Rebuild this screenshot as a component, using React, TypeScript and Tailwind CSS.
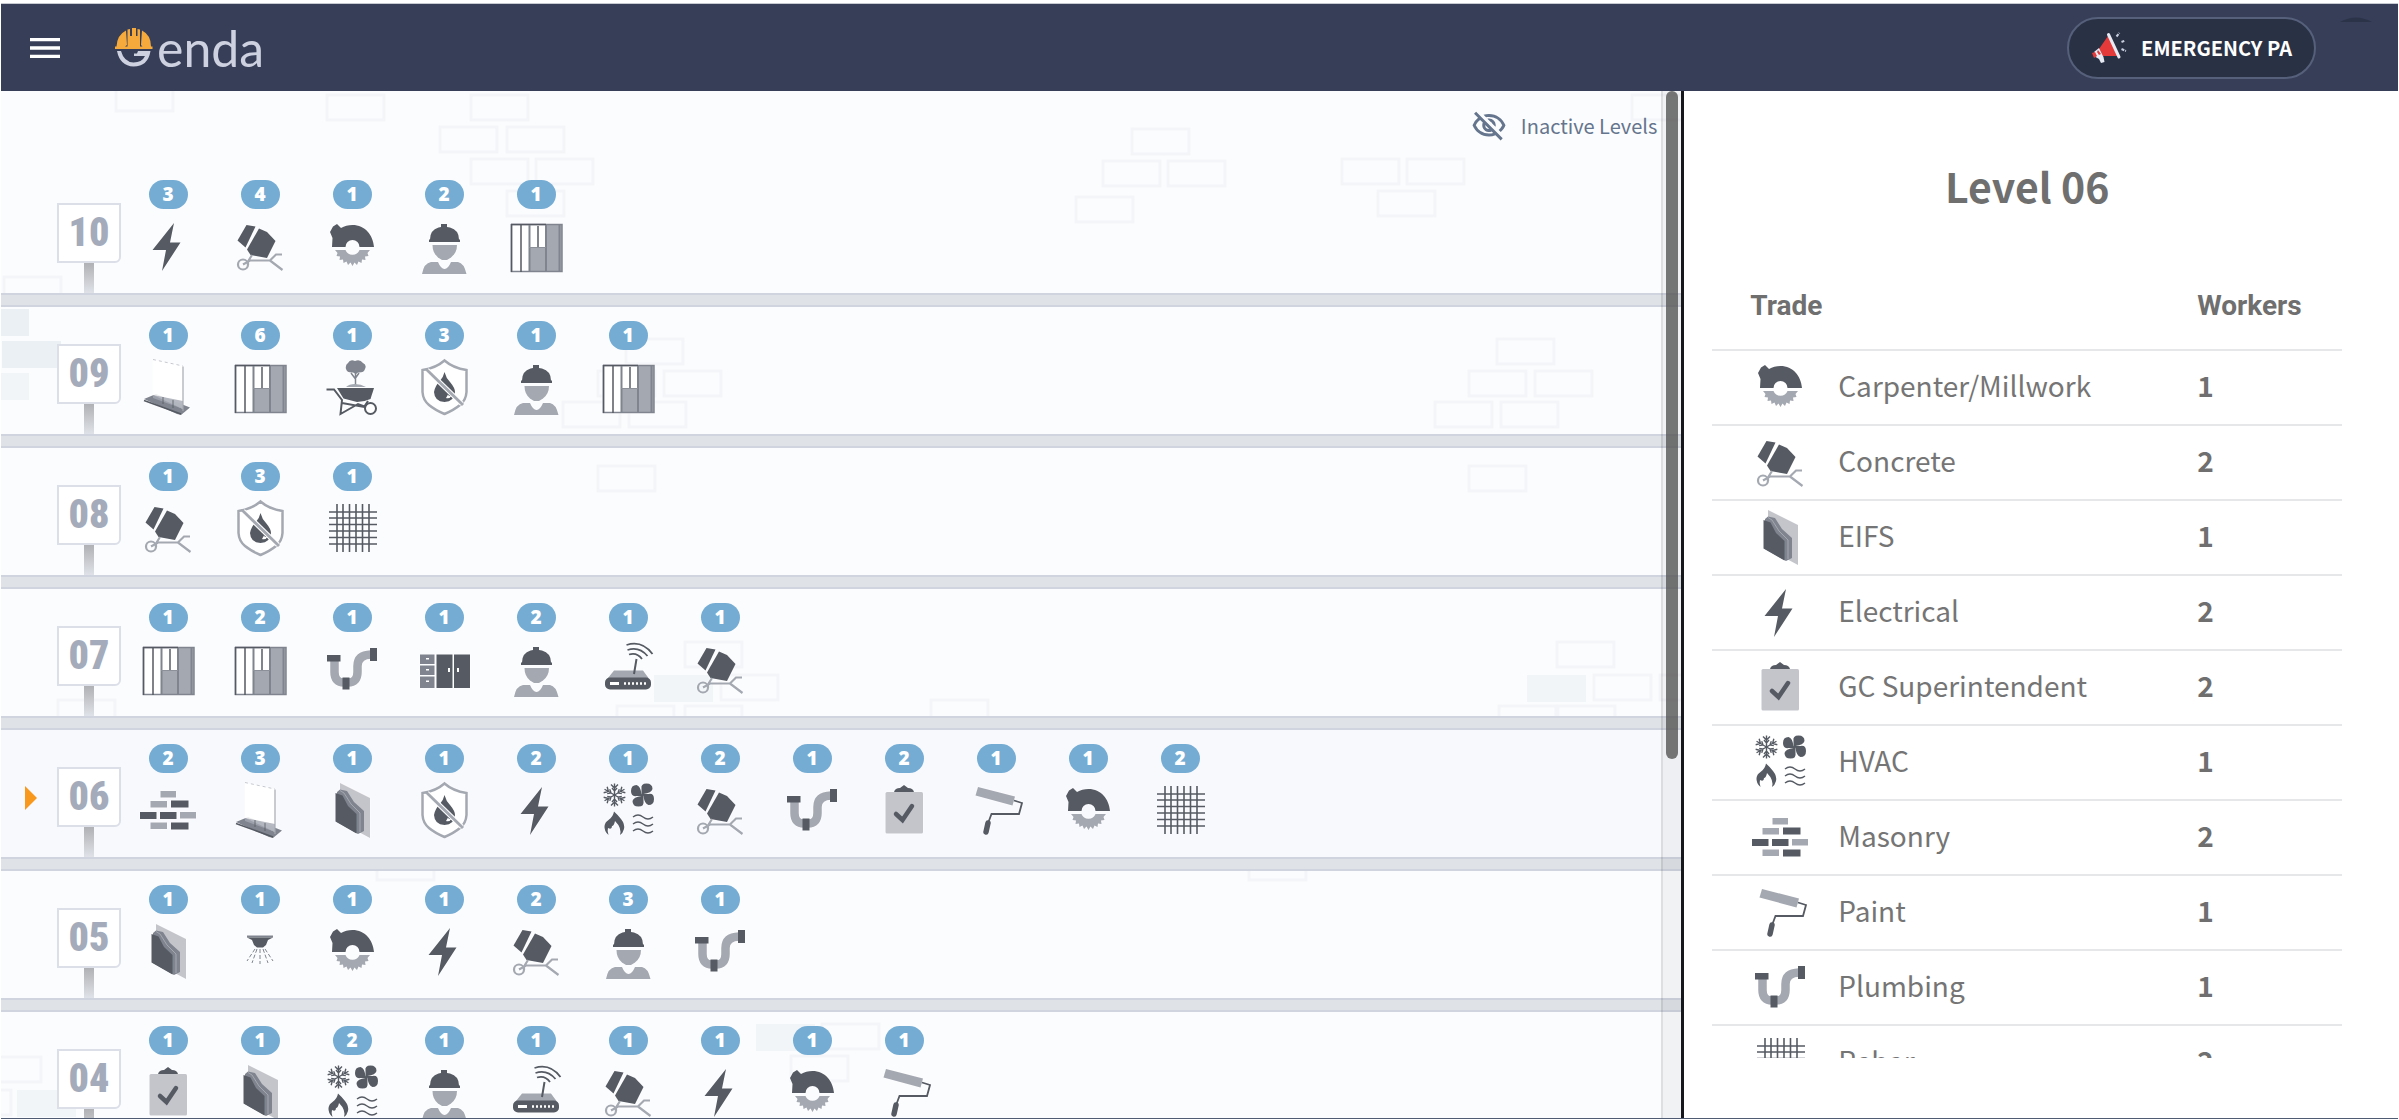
import { useState } from 'react';
import type { ReactNode } from 'react';
import { MdMenu, MdOutlineVisibilityOff } from 'react-icons/md';

type Trade =
  | 'bolt'
  | 'mixer'
  | 'saw'
  | 'worker'
  | 'partition'
  | 'drywall'
  | 'garden'
  | 'fireproof'
  | 'rebar'
  | 'pipe'
  | 'cabinet'
  | 'router'
  | 'masonry'
  | 'eifs'
  | 'hvac'
  | 'clipboard'
  | 'roller'
  | 'sprinkler';

type Crew = [Trade, number];

const DARK = '#555a63';
const MID = '#7f848e';
const LIGHT = '#a4a8b1';

const levels: { name: string; crews: Crew[] }[] = [
  {
    name: '10',
    crews: [
      ['bolt', 3],
      ['mixer', 4],
      ['saw', 1],
      ['worker', 2],
      ['partition', 1],
    ],
  },
  {
    name: '09',
    crews: [
      ['drywall', 1],
      ['partition', 6],
      ['garden', 1],
      ['fireproof', 3],
      ['worker', 1],
      ['partition', 1],
    ],
  },
  {
    name: '08',
    crews: [
      ['mixer', 1],
      ['fireproof', 3],
      ['rebar', 1],
    ],
  },
  {
    name: '07',
    crews: [
      ['partition', 1],
      ['partition', 2],
      ['pipe', 1],
      ['cabinet', 1],
      ['worker', 2],
      ['router', 1],
      ['mixer', 1],
    ],
  },
  {
    name: '06',
    crews: [
      ['masonry', 2],
      ['drywall', 3],
      ['eifs', 1],
      ['fireproof', 1],
      ['bolt', 2],
      ['hvac', 1],
      ['mixer', 2],
      ['pipe', 1],
      ['clipboard', 2],
      ['roller', 1],
      ['saw', 1],
      ['rebar', 2],
    ],
  },
  {
    name: '05',
    crews: [
      ['eifs', 1],
      ['sprinkler', 1],
      ['saw', 1],
      ['bolt', 1],
      ['mixer', 2],
      ['worker', 3],
      ['pipe', 1],
    ],
  },
  {
    name: '04',
    crews: [
      ['clipboard', 1],
      ['eifs', 1],
      ['hvac', 2],
      ['worker', 1],
      ['router', 1],
      ['mixer', 1],
      ['bolt', 1],
      ['saw', 1],
      ['roller', 1],
    ],
  },
];

const trades: { icon: Trade; name: string; workers: number }[] = [
  { icon: 'saw', name: 'Carpenter/Millwork', workers: 1 },
  { icon: 'mixer', name: 'Concrete', workers: 2 },
  { icon: 'eifs', name: 'EIFS', workers: 1 },
  { icon: 'bolt', name: 'Electrical', workers: 2 },
  { icon: 'clipboard', name: 'GC Superintendent', workers: 2 },
  { icon: 'hvac', name: 'HVAC', workers: 1 },
  { icon: 'masonry', name: 'Masonry', workers: 2 },
  { icon: 'roller', name: 'Paint', workers: 1 },
  { icon: 'pipe', name: 'Plumbing', workers: 1 },
  { icon: 'rebar', name: 'Rebar', workers: 2 },
];

const snowArms = [0, 60, 120, 180, 240, 300];
const fanBlades = [0, 90, 180, 270];

const drawings: Record<Trade, ReactNode> = {
  bolt: <path fill={DARK} d="M34 5 30 24.5H40.5L22 53 26 32H12.5Z" />,
  mixer: (
    <>
      <path fill={DARK} d="M14.5 7 23.5 8.5 13.5 29.5 5.5 22.5Z" />
      <path fill={DARK} d="M27 10.5 35 14 43.5 23 35 40 18.5 37 15 31.5Z" />
      <g fill="none" stroke={LIGHT} strokeWidth="2.2">
        <circle cx="11" cy="46.5" r="5" />
        <path d="M11 46.5 18 42.5H38L44 36.5H50M38 42.5 50.5 52M20 37 16 43.5V47" />
      </g>
    </>
  ),
  saw: (
    <>
      <path
        fill={DARK}
        d="M8 29 8.5 20 6 14 9 8.5 13 6 17 10Q22 7 28.5 7C41 7 49 17 50 29H35.5A7 7 0 0 0 21.5 29Z"
      />
      <path
        fill={LIGHT}
        d="M11 32H21.5A7.5 7.5 0 0 0 35.5 32H46L43.5 35 44.5 38 41 38.5 41.5 42 38 41.5 37.5 45 34.5 43.5 33 47 30.5 44.5 28.5 48 26.5 44.5 24 47 22.5 43.5 19.5 45 19 41.5 15.5 42 16 38.5 12.5 38 13.5 35Z"
      />
    </>
  ),
  worker: (
    <>
      <path
        fill={DARK}
        d="M13 24V21.5H14Q14 12 22.5 9.5L25 9V6H31V9L34 9.5Q43 12 43 21.5H44V24Z"
      />
      <path fill={LIGHT} d="M16.5 27H41Q41 35 35 39.5L31 42H26L22 39.5Q16.5 35 16.5 27Z" />
      <path fill={LIGHT} d="M6 56Q8 45 15 44H22Q25 51 28.5 51T35 44H42Q48 45 50.5 56Z" />
    </>
  ),
  partition: (
    <>
      <path fill="#fff" d="M3 6H37V54H3Z" />
      <path fill={LIGHT} d="M21 29H38V6H54V54H21Z" />
      <path fill="none" stroke={MID} strokeWidth="1.5" d="M3.5 6.5H54V53.5H3.5Z" />
      <path stroke={DARK} strokeWidth="1.5" d="M3.5 6V54M13 7V54M3 6.5H38" />
      <path stroke={MID} strokeWidth="2" d="M21.5 7V53M30 8V29M38 7V53M51.5 7V53" />
      <path stroke="#8c9099" d="M21 29.5H38" />
    </>
  ),
  drywall: (
    <>
      <path fill={MID} d="M4 40 16 35 50 48.5 41 56 37 55Z" />
      <path fill="#fff" fillOpacity="0.85" d="M13 1 43 7.5V50L13 36Z" />
      <path fill={LIGHT} fillOpacity="0.8" d="M13 36 43 42V50L13 39Z" />
      <path stroke={LIGHT} strokeWidth="1.2" d="M43 7.5V52" />
      <path stroke="#c5c8ce" strokeDasharray="3 3" d="M13 0.5 43 7" />
      <path stroke={DARK} strokeWidth="1.5" d="M4 41.5 41 55" />
      <path stroke={DARK} strokeWidth="0.8" d="M23 38V45M33 41V49" />
    </>
  ),
  garden: (
    <>
      <path
        fill={MID}
        d="M24 4Q26 0 31 2 36 0 39 4 43 6 41 10 40 14 34 13.5L32 15 29 13.5Q23 14 22 10 21 6 24 4Z"
      />
      <path stroke={MID} strokeWidth="1.5" fill="none" d="M31.5 14V27M31.5 20 27 14M31.5 19 35 14" />
      <path fill={LIGHT} d="M22 28Q25 25 31 25T42 28Z" />
      <path fill={DARK} d="M13 29H50L46.5 40Q40 43 33 43L19.5 39.5Z" />
      <path
        fill="none"
        stroke={DARK}
        strokeWidth="2"
        d="M2.5 30.5H10L18 41 16.5 55 34 45 46 49.5M18 44 40 48 44 42"
      />
      <circle cx="46.5" cy="49.5" r="5.5" fill="#fff" stroke={DARK} strokeWidth="2" />
    </>
  ),
  fireproof: (
    <>
      <path
        fill="#fff"
        stroke={LIGHT}
        strokeWidth="2.5"
        d="M28.5 1.5Q37 9 50.5 11V33Q50 41 44 46T28.5 55Q19 51 13 46T6.5 33V11Q20 9 28.5 1.5Z"
      />
      <path
        fill={DARK}
        d="M28.5 13Q30 19 34 23 39 29 39 33 38.5 42.5 28.5 43 18.5 42.5 18 33 19 27 23.5 22.5 27.5 18 28.5 13Z"
      />
      <path fill="#fff" d="M30 39Q34 40 35.5 36.5 33 38 32 35.5Z" />
      <path stroke="#fff" strokeWidth="5" d="M11 11 46 45" />
      <path stroke={LIGHT} strokeWidth="2.8" d="M10 10 47 46" />
    </>
  ),
  rebar: (
    <path
      stroke={DARK}
      strokeWidth="1.6"
      d="M13 4V52M19 4V52M25.5 4V52M32 4V52M38.5 4V52M45 4V52M5 12H53M5 18H53M5 24.5H53M5 31H53M5 37.5H53M5 44H53"
    />
  ),
  pipe: (
    <>
      <path
        fill="none"
        stroke={LIGHT}
        strokeWidth="8.5"
        d="M10.5 20V31Q10.5 41.5 20 41.5H24Q33.5 41.5 33.5 31V25Q33.5 14 47 13.5"
      />
      <path fill={DARK} d="M3 14H16.5V20.5H3ZM18.5 36.5H25.5V48.5H18.5ZM46 7H53V20H46Z" />
    </>
  ),
  cabinet: (
    <>
      <path fill={MID} d="M4 13.5H18.5V23H4ZM4 24.5H18.5V34H4ZM4 35.5H18.5V47H4Z" />
      <path fill={DARK} d="M20.5 13.5H36.5V47H20.5ZM38 13.5H54V47H38Z" />
      <path
        fill="#fff"
        d="M10 17H13V18.5H10ZM10 28H13V29.5H10ZM10 39.5H13V41H10ZM32 27H34V31H32ZM41 27H43V31H41Z"
      />
    </>
  ),
  router: (
    <>
      <path fill={LIGHT} d="M14 29.5H43L48.5 37H8Z" />
      <rect x="5" y="36.5" width="46" height="12" rx="5" fill={DARK} />
      <path fill="#fff" d="M10 41H19V44H10Z" />
      <path stroke="#fff" strokeWidth="2.5" strokeDasharray="2 2" d="M24 42.5H48" />
      <path stroke={DARK} strokeWidth="2" d="M34 33 36.5 18" />
      <g fill="none" stroke={DARK} strokeWidth="1.8">
        <path d="M26.5 4Q42 -1 52.5 13" />
        <path d="M27.5 9Q39 5 47.5 15" />
        <path d="M29 13.5Q37 11 42 18" />
      </g>
    </>
  ),
  masonry: (
    <>
      <path
        fill={LIGHT}
        d="M20.5 9H36V15.5H20.5ZM10.5 19H27V25.5H10.5ZM40 30H56V36.5H40ZM10.5 40.5H27V47H10.5Z"
      />
      <path
        fill={DARK}
        d="M31 18.5H48.5V25.5H31ZM0 30H16.5V37H0ZM20 30H36.5V37H20ZM31 40.5H48.5V47.5H31Z"
      />
    </>
  ),
  eifs: (
    <>
      <path fill="#c4c5cb" d="M16 1 46 16V56L16 40Z" />
      <path fill={MID} d="M13 10 16 7.5 23 9 30 20 40 29V49L34 52 13 40Z" />
      <path stroke={LIGHT} fill="none" d="M16 8.5 20 11 27 22 36 31V50" />
      <path fill={DARK} d="M11.5 11 18.5 13.5 24 24 32.5 32V51.5L11.5 39.5Z" />
    </>
  ),
  hvac: (
    <>
      <g fill="none" stroke={DARK} strokeWidth="1.4">
        {snowArms.map((deg) => (
          <path
            key={deg}
            transform={`translate(14.5 13) rotate(${deg})`}
            d="M0 0V-11.5M-3.5 -10.5 0 -7 3.5 -10.5M-2.5 -7 0 -4 2.5 -7"
          />
        ))}
      </g>
      {fanBlades.map((deg) => (
        <path
          key={deg}
          fill={DARK}
          transform={`translate(42.5 13) rotate(${deg})`}
          d="M-1 1 -1 -6Q-2 -11.5 4 -11.5 10 -11.5 10 -6 9 -2 1 -1Z"
        />
      ))}
      <path
        fill={DARK}
        d="M14 29.5Q18 33 21 37 25 42 24 47 23 51 20 53 22 46 15 39 14 44 12 44 12 48 8 46 7 49 8.5 53 4 49 4.5 44 5 40 8.5 38 13 35 14 29.5Z"
      />
      <path
        fill="none"
        stroke={DARK}
        strokeWidth="1.4"
        d="M33 35Q38 31 43 35T53 35M33 42Q38 38 43 42T53 42M33 49Q38 45 43 49T53 49"
      />
    </>
  ),
  clipboard: (
    <>
      <rect x="9.5" y="10" width="37.5" height="41.5" rx="1.5" fill="#c4c5cb" />
      <path fill={DARK} d="M18 10Q19 6 24 6L28 3 32 6Q37 6 38 10Z" />
      <path fill="none" stroke={DARK} strokeWidth="4.5" strokeLinecap="round" d="M20 32 26.5 38 36 24" />
    </>
  ),
  roller: (
    <>
      <path fill={LIGHT} d="M10 5 47 14.5 44.5 23.5 7.5 13.5Z" />
      <path fill="none" stroke={DARK} strokeWidth="1.8" d="M46 18.5 54 21 51 32H23.5L20.5 40" />
      <path stroke={DARK} strokeWidth="5.5" strokeLinecap="round" d="M20 41 18 50" />
    </>
  ),
  sprinkler: (
    <>
      <path fill={MID} d="M15 12.5H41V14.5H15Z" />
      <path fill={DARK} d="M15 14.5H41L36 17 34 22 31 24.5H25L22 22 20 17Z" />
      <path
        stroke={MID}
        strokeDasharray="4 2"
        d="M28 26V41M25 26 20 40M31 26 36 40M23 26 15 38M33 26 41 38"
      />
    </>
  ),
};

const TradeIcon = ({ trade }: { trade: Trade }) => (
  <svg
    viewBox="0 0 56 56"
    className="h-14 w-14 overflow-visible drop-shadow-[0_0_1px_white]"
    aria-hidden="true"
  >
    {drawings[trade]}
  </svg>
);

// faint brickwork behind the floors: x, y from the top of the board
const outlined: [number, number][] = [
  [115, -5], [326, 4], [470, 4], [439, 36], [506, 36], [470, 68], [535, 68],
  [506, 100], [3, 186], [1131, 38], [1102, 70], [1167, 70], [1075, 106],
  [1341, 68], [1406, 68], [1377, 100], [1631, 4], [625, 248], [597, 280],
  [663, 280], [562, 311], [628, 311], [1496, 248], [1468, 280], [1534, 280],
  [1434, 311], [1500, 311], [597, 375], [1468, 375], [684, 551], [720, 584],
  [616, 615], [684, 615], [57, 609], [930, 609], [1556, 551], [1593, 584],
  [1659, 584], [1498, 615], [1557, 615], [376, 764], [1248, 764], [821, 933],
  [790, 965], [-17, 966], [-47, 999],
];

const filled: [number, number, string][] = [
  [-31, 218, '#ebf0f4'],
  [1, 250, '#ebf0f4'],
  [-31, 282, '#f1f5f8'],
  [653, 584, '#f1f5f8'],
  [1526, 584, '#f1f5f8'],
  [755, 933, '#f1f5f8'],
  [16, 999, '#f1f5f8'],
];

const Brickwork = () => (
  <svg className="absolute inset-0 h-full w-full" aria-hidden="true">
    {filled.map(([x, y, fill]) => (
      <rect key={`${x}-${y}`} x={x} y={y} width="59" height="27" fill={fill} />
    ))}
    {outlined.map(([x, y]) => (
      <rect
        key={`${x}-${y}`}
        x={x}
        y={y}
        width="57"
        height="25"
        fill="none"
        stroke="#f3f5f8"
        strokeWidth="3"
      />
    ))}
  </svg>
);

const Logo = () => (
  <a href="#" className="flex items-center gap-1" aria-label="Genda">
    <svg viewBox="0 0 38 40" className="h-10 w-[38px]" aria-hidden="true">
      <path
        fill="#f6aa3c"
        d="M0 21V18.5H1.5Q2 7 11 2.5L12 17 10 18.5H12.5V1.5L15 1V8H17V0H21V8H22.5V1L25 1.5V18.5H27.5L26 17 27 2.5Q36 7 36 18.5H37.5V21Z"
      />
      <path
        fill="#cdd1e0"
        d="M2 23H6Q9 34 18.5 34.5 27 34.5 30 28H19V25.5L22 25.5 23 23H35.5Q33 38.5 18.5 38.5 5 38 2 23Z"
      />
    </svg>
    <span className="font-['Lato'] text-[50px] leading-[48px] text-[#cdd1e0]">enda</span>
  </a>
);

const Megaphone = () => (
  <svg viewBox="0 0 36 32" className="h-8 w-9" aria-hidden="true">
    <path fill="#e53a3a" d="M17 4 27 24 12 24 8 17Z" />
    <path fill="#e8ebf3" d="M8 16 12.5 25 13.5 30 10 31 8 27 4.5 25 3 20Z" />
    <path fill="#e53a3a" d="M1 21 4 20 6 24 3 26ZM7 18 10 22 8 23 6 20Z" />
    <path stroke="#e8ebf3" strokeWidth="3" strokeLinecap="round" d="M17.5 2.5 28 25" />
    <path
      stroke="#c7cede"
      strokeWidth="2"
      strokeDasharray="3 1"
      d="M25.5 4.5 28.5 1M30.5 10 34 8.5M30.5 17 35 19"
    />
  </svg>
);

const Header = () => (
  <header className="flex h-[88px] shrink-0 items-center border-t border-[#c8cad2] bg-[#373e58] px-6">
    <button type="button" aria-label="Open menu" className="text-white">
      <MdMenu className="h-10 w-10" />
    </button>
    <div className="ml-[50px]">
      <Logo />
    </div>
    <div className="ml-auto flex h-[62px] gap-6">
      <button
        type="button"
        className="flex items-center gap-3.5 rounded-full border-2 border-[#56607a] bg-[#293145] px-[22px] text-[20px] font-bold text-white"
      >
        <Megaphone />
        EMERGENCY PA
      </button>
      <svg viewBox="0 0 34 6" className="h-1.5 w-[34px]" aria-hidden="true">
        <path fill="#2b3348" d="M0 5Q16 -4 32 5Z" />
      </svg>
    </div>
  </header>
);

const LevelSign = ({ name }: { name: string }) => (
  <span className="flex w-16 flex-col items-center pt-[37px]">
    <span className="flex h-15 w-full items-center justify-center rounded-br-md border-2 border-[#dcdfe8] bg-white font-['Liberation_Sans_Narrow','Roboto_Condensed','Liberation_Sans',sans-serif] text-[40px] leading-none font-black text-[#a4abba]">
      {name}
    </span>
    <span className="w-2.5 flex-1 bg-linear-to-b from-[#b0b1b4] to-[#dfe2e8]" />
  </span>
);

interface LevelRowProps {
  name: string;
  crews: Crew[];
  active: boolean;
  onSelect: () => void;
}

const LevelRow = ({ name, crews, active, onSelect }: LevelRowProps) => (
  <li className="shrink-0">
    <button
      type="button"
      onClick={onSelect}
      aria-pressed={active}
      className={`flex h-[127px] w-full text-left ${active ? 'bg-[#f8f9fd]' : ''}`}
    >
      <span className="flex h-full w-14 items-center justify-center pt-2">
        {active && (
          <svg viewBox="0 0 12 24" className="ml-1 h-6 w-3" aria-hidden="true">
            <path fill="#f8981d" d="M0 0 12 12 0 24Z" />
          </svg>
        )}
      </span>
      <span className="flex h-full">
        <LevelSign name={name} />
      </span>
      <span className="flex pt-[14px] pl-px">
        {crews.map(([trade, count], i) => (
          <span key={i} className="flex w-[92px] flex-col items-center gap-[9px]">
            <span className="flex h-[29px] w-[39px] items-center justify-center rounded-full bg-[#75acd3] font-['Noto_Sans'] text-[19px] leading-none font-black text-white">
              {count}
            </span>
            <TradeIcon trade={trade} />
          </span>
        ))}
      </span>
    </button>
    <div className="h-3.5 border-y-2 border-[#d0d4de] bg-[#dfe2e7]" />
  </li>
);

const Building = ({
  selected,
  onSelect,
}: {
  selected: string;
  onSelect: (name: string) => void;
}) => (
  <main className="relative min-w-0 flex-1 overflow-hidden bg-[#fbfcfe]">
    <Brickwork />
    <div className="relative flex h-full flex-col">
      <div className="flex h-[75px] shrink-0 items-center justify-end pr-6 pb-1.5">
        <button type="button" className="flex items-center gap-3.5 text-[20px] text-[#65758d]">
          <MdOutlineVisibilityOff className="h-9 w-9" />
          Inactive Levels
        </button>
      </div>
      <ul className="flex flex-col">
        {levels.map(({ name, crews }) => (
          <LevelRow
            key={name}
            name={name}
            crews={crews}
            active={name === selected}
            onSelect={() => onSelect(name)}
          />
        ))}
      </ul>
    </div>
    <div className="absolute inset-y-0 right-0 w-5 border-l-2 border-black/8 bg-black/4">
      <div className="mx-auto h-[65%] w-3 rounded-full bg-[#555]/80" />
    </div>
  </main>
);

const LevelDetails = ({ name }: { name: string }) => (
  <aside className="flex w-[29.9%] shrink-0 flex-col border-l-[3px] border-[#15171c] bg-white pr-14 pb-15 pl-7 text-[#757575]">
    <h1 className="pt-16 text-center text-[41px] leading-[60px] font-bold text-[#6f6f6f]">
      Level {name}
    </h1>
    <div className="mt-[47px] min-h-0 flex-1 overflow-hidden">
      <table className="w-full table-fixed border-collapse">
        <colgroup>
          <col className="w-[20%]" />
          <col />
          <col className="w-[23%]" />
        </colgroup>
        <thead className="font-['Roboto'] text-[28px] text-[#6f6f6f]">
          <tr className="h-[88px] border-b-2 border-[#e6e7e8]">
            <th colSpan={2} className="pl-[38px] text-left font-bold">
              Trade
            </th>
            <th className="text-left font-bold">Workers</th>
          </tr>
        </thead>
        <tbody className="text-[28px] leading-none">
          {trades.map(({ icon, name: trade, workers }) => (
            <tr key={trade} className="h-[75px] border-b-2 border-[#e6e7e8]">
              <td className="pb-0.5 pl-10">
                <TradeIcon trade={icon} />
              </td>
              <td className="pb-1.5">{trade}</td>
              <td className="pb-1.5 font-bold text-[#6f6f6f]">{workers}</td>
            </tr>
          ))}
        </tbody>
      </table>
    </div>
  </aside>
);

export default function App() {
  const [selected, setSelected] = useState('06');

  return (
    <div className="flex h-screen flex-col bg-white px-px pt-[3px] pb-px font-['Noto_Sans_CJK_SC','Noto_Sans',sans-serif]">
      <Header />
      <div className="flex min-h-0 flex-1 border-b border-[#4f5b73]">
        <Building selected={selected} onSelect={setSelected} />
        <LevelDetails name={selected} />
      </div>
    </div>
  );
}
